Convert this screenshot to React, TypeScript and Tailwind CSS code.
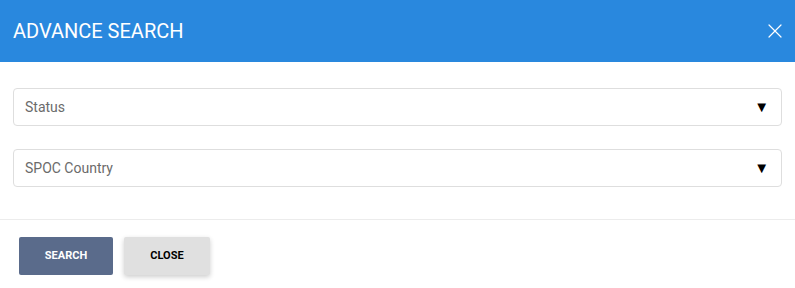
import { X } from 'lucide-react'

const FIELDS = ['Status', 'SPOC Country']

function SelectField({ label }: { label: string }) {
  return (
    <div className="flex h-[38px] items-center justify-between rounded-[4px] border border-[#dedede] bg-white pl-[11px] pr-[12px]">
      <span className="text-[14px] text-[#6b6b6b]">{label}</span>
      <span className="text-[15px] leading-none text-black">▼</span>
    </div>
  )
}

export default function App() {
  return (
    <div className="h-[288px] w-[795px] bg-white font-['Roboto',sans-serif]">
      {/* Header */}
      <div className="flex h-[62px] items-center justify-between bg-[#2988de] pl-[13px] pr-[8px]">
        <h1 className="text-[20px] font-normal text-white">ADVANCE SEARCH</h1>
        <X className="h-[24px] w-[24px] text-white" strokeWidth={1.2} />
      </div>

      {/* Fields */}
      <div className="flex flex-col gap-[23px] px-[13px] pb-[32px] pt-[26px]">
        {FIELDS.map((f) => (
          <SelectField key={f} label={f} />
        ))}
      </div>

      {/* Footer */}
      <div className="flex gap-[11px] border-t border-[#ececec] pl-[19px] pt-[17px]">
        <button className="h-[38px] w-[94px] rounded-[2px] bg-[#5a6b8b] text-[11px] font-bold text-white">
          SEARCH
        </button>
        <button className="h-[38px] w-[86px] rounded-[2px] bg-[#e0e0e0] text-[11px] font-bold text-black shadow-[0_2px_5px_rgba(0,0,0,0.2)]">
          CLOSE
        </button>
      </div>
    </div>
  )
}
